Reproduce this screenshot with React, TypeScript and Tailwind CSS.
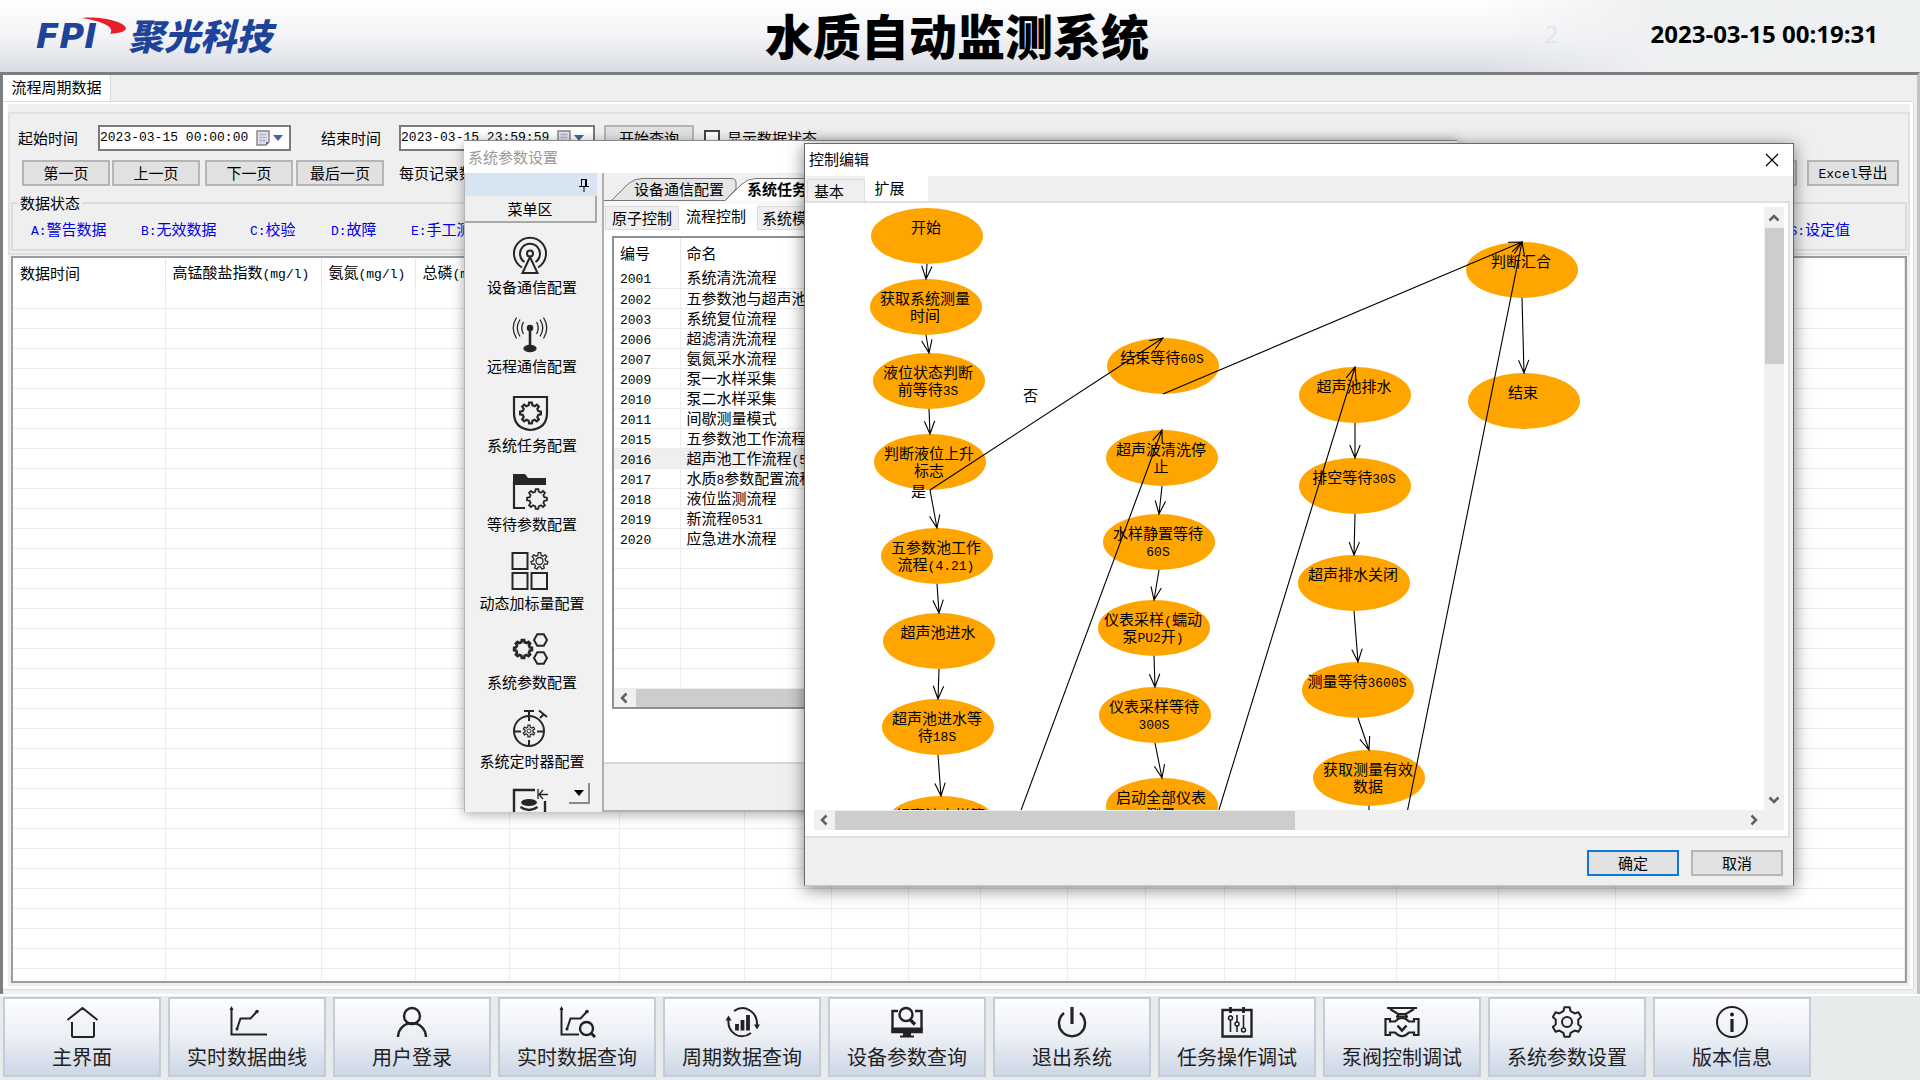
import React from "react";

const FONT = "font-['Noto_Sans_CJK_SC',sans-serif]";

/* Text with half-width characters set in a narrower monospace face. */
function Mixed({ text }: { text: string }) {
  return (
    <>
      {text.split(/([\x20-\x7e]+)/).map((part, i) =>
        i % 2 === 1 ? (
          <span key={i} className="font-['Liberation_Mono',monospace] text-[13px]">
            {part}
          </span>
        ) : (
          part
        ),
      )}
    </>
  );
}

function gear(cx: number, cy: number, inner: number, outer: number, teeth: number) {
  const pts: string[] = [];
  const step = (Math.PI * 2) / teeth;
  for (let i = 0; i < teeth; i++) {
    const a = i * step - Math.PI / 2;
    const spots: [number, number][] = [
      [inner, -0.3],
      [outer, -0.17],
      [outer, 0.17],
      [inner, 0.3],
    ];
    for (const [r, f] of spots) {
      pts.push(`${(cx + r * Math.cos(a + f * step)).toFixed(2)} ${(cy + r * Math.sin(a + f * step)).toFixed(2)}`);
    }
  }
  return `M${pts.join("L")}Z`;
}

function hexagon(cx: number, cy: number, r: number) {
  const pts = [0, 1, 2, 3, 4, 5].map((i) => {
    const a = (i * Math.PI) / 3;
    return `${(cx + r * Math.cos(a)).toFixed(2)} ${(cy + r * Math.sin(a)).toFixed(2)}`;
  });
  return `M${pts.join("L")}Z`;
}

/* ---------- header ---------- */

function Header() {
  return (
    <header className="relative flex h-[72px] shrink-0 items-center justify-between bg-gradient-to-b from-white via-[#f3f4f6] to-[#d9dce4] pb-1 pl-9 pr-[42px]">
      <div className="absolute inset-y-0 right-0 w-[440px] bg-gradient-to-r from-transparent to-[#eef0f2] to-40%" />
      <div className="relative flex flex-1 items-center text-[#20439a]">
        <svg width="92" height="40" viewBox="0 0 92 40" aria-label="FPI">
          <text x="0" y="34" fontFamily="DejaVu Sans" fontWeight="700" fontStyle="italic" fontSize="34" fill="#20439a">
            FPI
          </text>
          <path d="M46 4C66 2 88 8 90 14C90 18 82 19 74 20C79 14 70 8 46 4Z" fill="#e5202b" />
        </svg>
        <span className="text-[36px] font-black italic leading-10">聚光科技</span>
      </div>
      <h1 className="relative text-[48px] font-black leading-[60px] text-black">水质自动监测系统</h1>
      <div className="relative flex flex-1 items-center justify-end font-['Open_Sans',sans-serif] text-2xl font-bold text-black">
        <span className="mr-[92px] font-normal text-[#e3e6ea]">2</span>
        <time>2023-03-15 00:19:31</time>
      </div>
    </header>
  );
}

/* ---------- query page ---------- */

const BTN = "flex items-center justify-center border-2 border-[#b5b5b5] bg-[#e1e1e1] leading-5 text-black";

function DateField({ id, value, width }: { id: string; value: string; width: string }) {
  return (
    <div className={`flex h-[26px] items-center border-2 border-[#7a7a7a] bg-white ${width}`}>
      <input
        id={id}
        defaultValue={value}
        className="w-[152px] min-w-0 bg-transparent font-['Liberation_Mono',monospace] text-[13px] leading-5 outline-none"
      />
      <button type="button" aria-label="选择日期" className="ml-1 flex items-center gap-[3px]">
        <svg width="14" height="16" viewBox="0 0 14 16">
          <path d="M1 1h12v11l-3 3H1z" fill="#dfe3ec" stroke="#8b8286" strokeWidth="1.4" />
          <path d="M3 4.500h8M3 7.500h8M3 10.500h8M5 3v10M8 3v10" stroke="#b3bccd" strokeWidth="1" />
          <path d="M13 12l-3 3v-3z" fill="#6c6266" />
        </svg>
        <svg width="10" height="6" viewBox="0 0 10 6">
          <path d="M0 0h10L5 6z" fill="#44659c" />
        </svg>
      </button>
    </div>
  );
}

const COLS = [
  "w-[152px]", "w-[156px]", "w-[94px]", "w-[94px]", "w-[110px]", "w-[125px]", "w-[87px]", "w-[77px]", "w-[72px]",
  "w-[87px]", "w-[78px]", "w-[79px]", "w-[71px]", "w-[101px]", "w-[102px]", "w-[117px]", "",
];
const HEADS = ["数据时间", "高锰酸盐指数(mg/l)", "氨氮(mg/l)", "总磷(mg/l)"];
const PAGERS: [string, string][] = [
  ["第一页", "mr-[2px]"],
  ["上一页", "mr-[5px]"],
  ["下一页", "mr-[3px]"],
  ["最后一页", "mr-[15px]"],
];
const STATES: [string, string][] = [
  ["A:警告数据", "w-[110px]"],
  ["B:无效数据", "w-[109px]"],
  ["C:校验", "w-[81px]"],
  ["D:故障", "w-[80px]"],
  ["E:手工测试", "w-[110px]"],
];

function QueryPage() {
  return (
    <main className="flex min-h-0 flex-1 flex-col border-[3px] border-b-0 border-[#7c7e82] border-r-[#c4c4c4] bg-[#efefef] text-[15px]">
      <div role="tablist" className="flex h-[26px] shrink-0 items-stretch">
        <button type="button" role="tab" aria-selected className="w-[108px] border-r border-[#d9d9d9] bg-white pb-[2px] leading-5">
          流程周期数据
        </button>
      </div>
      <div className="mb-1 mr-[3px] flex min-h-0 flex-1 flex-col border border-l-0 border-[#dcdcdc] bg-white px-[3px] pb-[3px] pl-[5px] pt-[2px]">
        <div className="flex min-h-0 flex-1 flex-col bg-[#efefef] pt-2">
          <div className="shrink-0 border-2 border-[#e0e0e0] pb-[2px] pt-[11px]">
            <div className="flex h-[26px] items-center pl-2">
              <label htmlFor="from" className="mr-5">起始时间</label>
              <DateField id="from" value="2023-03-15 00:00:00" width="w-[193px]" />
              <label htmlFor="to" className="ml-[30px] mr-[18px]">结束时间</label>
              <DateField id="to" value="2023-03-15 23:59:59" width="w-[196px]" />
              <button type="button" className={`${BTN} ml-[9px] mr-[10px] h-[26px] w-[90px]`}>开始查询</button>
              <input id="show" type="checkbox" className="mr-[7px] size-4 appearance-none border-2 border-[#444] bg-white" />
              <label htmlFor="show">显示数据状态</label>
            </div>
            <div className="mt-[9px] flex h-[26px] items-center pl-3 pr-[9px]">
              {PAGERS.map(([t, gap]) => (
                <button key={t} type="button" className={`${BTN} h-[26px] w-[88px] ${gap}`}>{t}</button>
              ))}
              <span>每页记录数</span>
              <button type="button" className={`${BTN} ml-auto mr-[10px] h-[26px] w-[92px]`}>查询</button>
              <button type="button" className={`${BTN} h-[26px] w-[92px]`}>
                <span><Mixed text="Excel导出" /></span>
              </button>
            </div>
            <fieldset className="mx-px mt-[9px] border-2 border-[#dcdcdc]">
              <legend className="ml-[5px] px-[2px] leading-4">数据状态</legend>
              <div className="flex h-[38px] items-center pl-[18px] pr-[55px] text-[#0000e6]">
                {STATES.map(([t, w]) => (
                  <span key={t} className={`${w} whitespace-nowrap leading-5`}><Mixed text={t} /></span>
                ))}
                <span className="ml-auto leading-5"><Mixed text="S:设定值" /></span>
              </div>
            </fieldset>
          </div>
          <div className="mx-[3px] mb-[3px] mt-px min-h-0 flex-1 overflow-hidden border-2 border-[#9a9ca0] bg-white">
            <table className="w-full table-fixed border-collapse">
              <colgroup>
                {COLS.map((w, i) => <col key={i} className={w} />)}
              </colgroup>
              <thead>
                <tr className="h-[30px]">
                  {COLS.map((_, i) => (
                    <th
                      key={i}
                      scope="col"
                      className="overflow-hidden whitespace-nowrap border-r border-[#e6e6e6] p-0 pl-[7px] text-left font-normal leading-5"
                    >
                      {HEADS[i] ? <Mixed text={HEADS[i]} /> : null}
                    </th>
                  ))}
                </tr>
              </thead>
              <tbody>
                {Array.from({ length: 34 }, (_, r) => (
                  <tr key={r} className="h-5">
                    {COLS.map((_, i) => <td key={i} className="border-b border-r border-[#ececec] p-0" />)}
                  </tr>
                ))}
                <tr className="h-5">
                  {COLS.map((_, i) => <td key={i} className="border-r border-[#ececec] p-0" />)}
                </tr>
              </tbody>
            </table>
          </div>
        </div>
      </div>
    </main>
  );
}

/* ---------- settings window ---------- */

const MENU: { label: string; icon: React.ReactNode }[] = [
  {
    label: "设备通信配置",
    icon: (
      <g fill="none" stroke="#262626" strokeWidth="2">
        <path d="M12 33.500A16 16 0 1 1 28 33.500" />
        <path d="M14.500 28A10 10 0 1 1 25.500 28" />
        <circle cx="20" cy="19.500" r="3" />
        <path d="M20 23L12.500 39H27.500Z" />
      </g>
    ),
  },
  {
    label: "远程通信配置",
    icon: (
      <g fill="none" stroke="#262626" strokeWidth="1.3">
        <path d="M13.500 9Q10 15 13.500 21M10 6.500Q4.500 15 10 23.500M6.500 4.500Q0 15 6.500 25.500" />
        <path d="M26.500 9Q30 15 26.500 21M30 6.500Q35.500 15 30 23.500M33.500 4.500Q40 15 33.500 25.500" />
        <circle cx="20" cy="15" r="2.600" fill="#262626" />
        <path d="M20 15V35" strokeWidth="2.600" />
        <ellipse cx="20" cy="35.500" rx="6" ry="3" fill="#262626" />
      </g>
    ),
  },
  {
    label: "系统任务配置",
    icon: (
      <g fill="none" stroke="#262626" strokeWidth="2.200">
        <path d="M4 5H37V21C37 31 31 37 20.500 38C10 37 4 31 4 21Z" />
        <path d={gear(20.5, 21, 8, 10.5, 8)} strokeWidth="2.200" />
      </g>
    ),
  },
  {
    label: "等待参数配置",
    icon: (
      <g fill="none" stroke="#262626" strokeWidth="2.200">
        <path d="M3 3H15L18 7H36V14H3Z" fill="#262626" stroke="none" />
        <path d="M4 10V37H15" />
        <path d={gear(27, 28, 7.5, 10, 8)} strokeWidth="1.800" />
      </g>
    ),
  },
  {
    label: "动态加标量配置",
    icon: (
      <g fill="none" stroke="#262626" strokeWidth="2">
        <path d="M2.500 3H17.500V19H2.500ZM2.500 23H17.500V39H2.500ZM21.500 23H37V39H21.500Z" />
        <path d={gear(29.5, 11, 6, 8.5, 7)} strokeWidth="1.300" />
        <circle cx="29.500" cy="11" r="3.500" strokeWidth="1.300" />
      </g>
    ),
  },
  {
    label: "系统参数配置",
    icon: (
      <g fill="none" stroke="#262626" strokeWidth="2">
        <path d={gear(13, 20, 7, 9, 8)} strokeWidth="2.600" />
        <path d={hexagon(30.5, 11, 6.5)} />
        <path d={hexagon(30.5, 29, 6.5)} />
      </g>
    ),
  },
  {
    label: "系统定时器配置",
    icon: (
      <g fill="none" stroke="#262626" strokeWidth="2">
        <circle cx="19" cy="23" r="15" />
        <path d="M14 3H24M19 3V13M30 10L34 6M29 2.500L37 9M19 32V38M4 23.500H11M27 23.500H34" />
        <path d={gear(19, 23, 4, 6, 6)} strokeWidth="1.200" />
        <circle cx="19" cy="23" r="2" strokeWidth="1" />
      </g>
    ),
  },
  {
    label: "数据导出配置",
    icon: (
      <g fill="none" stroke="#262626" strokeWidth="2.400">
        <path d="M25 3H4V39M35 14V39" />
        <ellipse cx="19" cy="15.500" rx="8" ry="3.500" fill="#262626" stroke="none" />
        <path d="M10.500 20Q19 26 27.500 20" />
        <path d="M28 2V12M38 7.500H29M33 3L29 7.500L33 12" strokeWidth="1.300" />
      </g>
    ),
  },
];

const FLOWS: [string, string][] = [
  ["2001", "系统清洗流程"],
  ["2002", "五参数池与超声池流程"],
  ["2003", "系统复位流程"],
  ["2006", "超滤清洗流程"],
  ["2007", "氨氮采水流程"],
  ["2009", "泵一水样采集"],
  ["2010", "泵二水样采集"],
  ["2011", "间歇测量模式"],
  ["2015", "五参数池工作流程"],
  ["2016", "超声池工作流程(5)"],
  ["2017", "水质8参数配置流程"],
  ["2018", "液位监测流程"],
  ["2019", "新流程0531"],
  ["2020", "应急进水流程"],
  ["", ""], ["", ""], ["", ""], ["", ""], ["", ""], ["", ""], ["", ""],
];

function SettingsWindow() {
  return (
    <section
      aria-label="系统参数设置"
      className="absolute left-[464px] top-[140px] flex h-[672px] w-[993px] flex-col border-t border-[#8a8a8a] bg-[#efefef] text-[15px] shadow-[0_2px_12px_rgba(0,0,0,0.35)]"
    >
      <div className="flex h-8 shrink-0 items-center bg-white pl-1 text-[#999]">系统参数设置</div>
      <div className="flex min-h-0 flex-1">
        <nav className="relative w-[138px] overflow-hidden border-l border-[#b5b5b5] bg-[#f1f1f1]">
          <div className="flex h-[23px] w-[132px] items-center justify-end bg-[#d7e4f2] pr-2">
            <svg width="10" height="14" viewBox="0 0 10 14" fill="none" stroke="#000">
              <path d="M2.500 1V8M2 1.500H8M0 8.500H10M5 9V14" />
              <path d="M7 1V8" strokeWidth="2" />
            </svg>
          </div>
          <button type="button" className="mb-px h-[27px] w-[132px] border-b-2 border-r-2 border-[#a8a8a8] bg-[#efefef] leading-5">
            菜单区
          </button>
          <ul className="w-[130px]">
            {MENU.map(({ label, icon }) => (
              <li key={label} className="h-[79px] pt-[10px]">
                <button type="button" className="flex w-full flex-col items-center whitespace-nowrap">
                  <svg width="40" height="40" viewBox="0 0 40 40">{icon}</svg>
                  <span className="ml-1 mt-[3px] leading-5">{label}</span>
                </button>
              </li>
            ))}
          </ul>
          <button
            type="button"
            aria-label="向下滚动"
            className="absolute bottom-2 left-[104px] flex size-[21px] items-center justify-center border-b-2 border-r-2 border-[#8a8a8a] bg-[#f1f1f1]"
          >
            <svg width="10" height="6" viewBox="0 0 10 6"><path d="M0 0h10L5 6z" /></svg>
          </button>
        </nav>
        <div className="flex min-w-0 flex-1 flex-col border-b-2 border-l-2 border-[#b0b0b0]">
          <div role="tablist" className="relative flex h-7 shrink-0 items-end">
            <svg className="absolute inset-0" width="500" height="28" viewBox="0 0 500 28" fill="none" stroke="#777">
              <path d="M0 27.500H121L138 11Q144 5.500 152 5.500H260V28" fill="#fff" stroke="none" />
              <path d="M0 0H152Q144 5.500 138 11L121 27.500H0Z" fill="#efefef" stroke="none" />
              <path d="M0 27.500H121L138 11Q144 5.500 152 5.500H260V28" />
              <path d="M7.500 27.500L24 11Q30 5.500 38 5.500H128Q132 5.500 132 10V16L121 27.500Z" fill="#e6e6e6" />
            </svg>
            <button type="button" role="tab" className="relative ml-[30px] mr-[23px] pb-[2px] leading-5">设备通信配置</button>
            <button type="button" role="tab" aria-selected className="relative pb-[2px] font-bold leading-5">系统任务配置</button>
          </div>
          <div className="flex min-h-0 flex-1 flex-col bg-white">
            <div role="tablist" className="flex h-[29px] shrink-0 items-end bg-[#f7f7f7] pl-px">
              <button type="button" role="tab" className="h-6 w-[74px] border border-[#dcdcdc] bg-[#efefef] leading-5">原子控制</button>
              <button type="button" role="tab" aria-selected className="h-[26px] w-[78px] bg-white pb-[2px] pr-1 leading-5">流程控制</button>
              <button type="button" role="tab" className="h-6 w-[70px] border border-[#dcdcdc] bg-[#efefef] leading-5">系统模式</button>
            </div>
            <div className="ml-2 mr-2 mt-[6px] h-[473px] shrink-0 overflow-hidden border-2 border-[#8e9096] bg-white">
              <table className="w-full table-fixed border-collapse">
                <colgroup>
                  <col className="w-[66px]" />
                  <col />
                </colgroup>
                <thead>
                  <tr className="h-[30px]">
                    <th scope="col" className="border-r border-[#e6e6e6] p-0 pl-[6px] text-left font-normal leading-5">编号</th>
                    <th scope="col" className="p-0 pl-[6px] text-left font-normal leading-5">命名</th>
                  </tr>
                </thead>
                <tbody>
                  {FLOWS.map(([id, name], i) => (
                    <tr key={i} className={id === "2016" ? "h-5 bg-[#efefef]" : "h-5"}>
                      <td className="border-b border-r border-[#ececec] p-0 pl-[6px]">
                        <div className="h-[19px] leading-[18px]"><Mixed text={id} /></div>
                      </td>
                      <td className="border-b border-[#ececec] p-0 pl-[6px]">
                        <div className="h-[19px] leading-[18px]"><Mixed text={name} /></div>
                      </td>
                    </tr>
                  ))}
                </tbody>
              </table>
              <div className="flex h-[19px] items-center bg-[#f0f0f0]">
                <span className="flex w-[22px] justify-center"><Chevron dir="left" /></span>
                <span className="h-full w-[600px] bg-[#cdcdcd]" />
              </div>
            </div>
            <div className="mt-auto h-12 border-t-2 border-[#d8d8d8] bg-[#efefef]" />
          </div>
        </div>
      </div>
    </section>
  );
}

const CHEVRONS = {
  left: "M7.500 1.500L3 6L7.500 10.500",
  right: "M4.500 1.500L9 6L4.500 10.500",
  up: "M1.500 8.500L6 4L10.500 8.500",
  down: "M1.500 3.500L6 8L10.500 3.500",
};

function Chevron({ dir }: { dir: keyof typeof CHEVRONS }) {
  return (
    <svg width="12" height="12" viewBox="0 0 12 12" fill="none" stroke="#606060" strokeWidth="2.500">
      <path d={CHEVRONS[dir]} />
    </svg>
  );
}

/* ---------- flow editor window ---------- */

type FlowNode = { x: number; y: number; lines: string[] };

/* Centres on the canvas; every node is an ellipse of 112 by 56. */
const NODES: FlowNode[] = [
  { x: 113, y: 29, lines: ["开始"] },
  { x: 112, y: 100, lines: ["获取系统测量", "时间"] },
  { x: 115, y: 174, lines: ["液位状态判断", "前等待3S"] },
  { x: 116, y: 255, lines: ["判断液位上升", "标志"] },
  { x: 123, y: 349, lines: ["五参数池工作", "流程(4.21)"] },
  { x: 125, y: 434, lines: ["超声池进水"] },
  { x: 124, y: 520, lines: ["超声池进水等", "待18S"] },
  { x: 127, y: 617, lines: ["超声池水样等", "待"] },
  { x: 349, y: 159, lines: ["结束等待60S"] },
  { x: 348, y: 251, lines: ["超声波清洗停", "止"] },
  { x: 345, y: 335, lines: ["水样静置等待", "60S"] },
  { x: 340, y: 421, lines: ["仪表采样(蠕动", "泵PU2开)"] },
  { x: 341, y: 508, lines: ["仪表采样等待", "300S"] },
  { x: 348, y: 599, lines: ["启动全部仪表", "测量"] },
  { x: 541, y: 188, lines: ["超声池排水"] },
  { x: 541, y: 279, lines: ["排空等待30S"] },
  { x: 540, y: 376, lines: ["超声排水关闭"] },
  { x: 544, y: 483, lines: ["测量等待3600S"] },
  { x: 555, y: 571, lines: ["获取测量有效", "数据"] },
  { x: 708, y: 63, lines: ["判断汇合"] },
  { x: 710, y: 194, lines: ["结束"] },
];

const LINKS: [number, number][] = [
  [0, 1], [1, 2], [2, 3], [3, 4], [4, 5], [5, 6], [6, 7], [3, 8], [8, 19],
  [9, 10], [10, 11], [11, 12], [12, 13], [14, 15], [15, 16], [16, 17], [17, 18], [19, 20],
];

function arrow(x1: number, y1: number, x2: number, y2: number) {
  const a = Math.atan2(y2 - y1, x2 - x1);
  const barb = (d: number) => `${(x2 - 14 * Math.cos(a + d)).toFixed(1)} ${(y2 - 14 * Math.sin(a + d)).toFixed(1)}`;
  return `M${x1} ${y1}L${x2} ${y2}M${barb(0.38)}L${x2} ${y2}L${barb(-0.38)}`;
}

const EDGES: string[] = [
  ...LINKS.map(([a, b]) => arrow(NODES[a].x, NODES[a].y + 28, NODES[b].x, NODES[b].y - 28)),
  arrow(206, 606, 348, 223),
  arrow(404, 606, 541, 160),
  arrow(593, 606, 708, 35),
  "M555 599V610",
];

function FlowCanvas() {
  return (
    <div className="relative h-full min-w-0 flex-1 overflow-hidden bg-white">
      {NODES.map((n, i) => (
        <div
          key={i}
          className="absolute h-14 w-28 -translate-x-1/2 -translate-y-1/2 whitespace-nowrap rounded-[50%] bg-[#ffa500] pr-[2px] pt-[10px] text-center leading-[17px]"
          style={{ left: n.x, top: n.y }}
        >
          {n.lines.map((l) => (
            <div key={l} className="-mx-4 h-[17px]"><Mixed text={l} /></div>
          ))}
        </div>
      ))}
      <span className="absolute left-[209px] top-[178px] leading-5">否</span>
      <span className="absolute left-[97px] top-[274px] leading-5">是</span>
      <svg className="absolute inset-0" width="951" height="604" viewBox="0 0 951 604" fill="none" stroke="#000" strokeWidth="1.100">
        {EDGES.map((d) => <path key={d} d={d} />)}
      </svg>
    </div>
  );
}

function EditorWindow() {
  return (
    <section
      aria-label="控制编辑"
      className="absolute left-[804px] top-[143px] flex w-[990px] flex-col border border-[#6a6a6a] border-b-[#c8c8c8] bg-[#efefef] text-[15px] shadow-[0_3px_16px_rgba(0,0,0,0.5)]"
    >
      <div className="flex h-8 items-center justify-between bg-white pl-1 pr-[14px]">
        <span className="pb-px">控制编辑</span>
        <button type="button" aria-label="关闭">
          <svg width="14" height="14" viewBox="0 0 14 14" stroke="#000" strokeWidth="1.200"><path d="M1 1L13 13M13 1L1 13" /></svg>
        </button>
      </div>
      <div role="tablist" className="flex h-[25px] items-end pl-[2px]">
        <button type="button" role="tab" className="h-[22px] w-[58px] border border-b-0 border-[#dedede] pr-[14px] leading-5">基本</button>
        <button type="button" role="tab" aria-selected className="h-[25px] w-[63px] bg-white pb-[2px] pr-[14px] leading-5">扩展</button>
      </div>
      <div className="mr-[3px] border-2 border-l-0 border-[#dfdfdf] bg-white pb-[6px] pl-[9px] pr-1 pt-1">
        <div className="flex h-[603px]">
          <FlowCanvas />
          <div className="flex w-5 flex-col items-center bg-[#f0f0f0]">
            <span className="flex h-[21px] items-center"><Chevron dir="up" /></span>
            <span className="h-[136px] w-[19px] bg-[#cdcdcd]" />
            <span className="mt-auto flex h-[21px] items-center"><Chevron dir="down" /></span>
          </div>
        </div>
        <div className="flex h-5 items-center bg-[#f0f0f0]">
          <span className="flex w-[21px] justify-center"><Chevron dir="left" /></span>
          <span className="h-[19px] w-[460px] bg-[#cdcdcd]" />
          <span className="ml-auto mr-[25px]"><Chevron dir="right" /></span>
        </div>
      </div>
      <div className="flex justify-end gap-3 pb-[9px] pr-[10px] pt-3">
        <button type="button" className="h-[26px] w-[92px] border-2 border-[#0f78d4] bg-[#e1e1e1] leading-5">确定</button>
        <button type="button" className={`${BTN} h-[26px] w-[92px]`}>取消</button>
      </div>
    </section>
  );
}

/* ---------- bottom bar ---------- */

const TOOLS: { label: string; icon: React.ReactNode }[] = [
  { label: "主界面", icon: <path d="M7.500 14L22.500 2L37.500 14M12 16V29.500Q12 31 13.500 31H32.500Q34 31 34 29.500V16" /> },
  {
    label: "实时数据曲线",
    icon: (
      <>
        <path d="M6.500 2V28.500H42M12 23L15.500 12.500H25.500L32 5.500" />
        <path d="M4.500 4L6.500 0L8.500 4Z" fill="#222" stroke="none" />
        <circle cx="12" cy="23" r="1.500" fill="#222" stroke="none" />
        <circle cx="32" cy="5.500" r="1.800" fill="#222" stroke="none" />
      </>
    ),
  },
  {
    label: "用户登录",
    icon: <g strokeWidth="2.400"><circle cx="22" cy="10" r="8" /><path d="M8 31C9 12.500 35 12.500 36 31" /></g>,
  },
  {
    label: "实时数据查询",
    icon: (
      <>
        <path d="M6.500 2V28.500H24M12 23L15.500 12.500H25.500L32 5.500" />
        <path d="M4.500 4L6.500 0L8.500 4Z" fill="#222" stroke="none" />
        <circle cx="12" cy="23" r="1.500" fill="#222" stroke="none" />
        <circle cx="32" cy="5.500" r="1.800" fill="#222" stroke="none" />
        <circle cx="31.500" cy="22.500" r="6.500" strokeWidth="2.400" />
        <path d="M36 27L40 31" strokeWidth="3" />
      </>
    ),
  },
  {
    label: "周期数据查询",
    icon: (
      <>
        <path d="M14 5C24 -2 38 5 37 20M31 27C20 35 7 27 8.500 13" />
        <path d="M34 18.500H40L37 23.500ZM5.500 14.500H11.500L8.500 9.500Z" fill="#222" stroke="none" />
        <path d="M17 18V24.500M22.500 14V24.500M28 9V24.500" strokeWidth="3.800" />
      </>
    ),
  },
  {
    label: "设备参数查询",
    icon: (
      <>
        <path d="M13 5H7.500V26H36.500V5H30" strokeWidth="2.400" />
        <path d="M6.500 21.500H37.500V27H26V29.500H29V31.500H15V29.500H18V27H6.500Z" fill="#222" stroke="none" />
        <circle cx="21" cy="8.500" r="6.500" strokeWidth="2.400" />
        <path d="M25 13.500L30 18.500" strokeWidth="3.200" />
      </>
    ),
  },
  { label: "退出系统", icon: <g strokeWidth="2.400"><path d="M22 1V18" strokeWidth="3.200" /><path d="M14 7A13 13 0 1 0 30 7" /></g> },
  {
    label: "任务操作调试",
    icon: (
      <>
        <path d="M7.500 4H36.500V30.500H7.500Z" strokeWidth="2.400" />
        <path d="M15.500 1V7M28.500 1V7" strokeWidth="2.800" />
        <path d="M15.500 9V26M22 9V26M28.500 9V26" strokeWidth="1.600" />
        <g fill="#f4f5f9" strokeWidth="1.500"><circle cx="15.500" cy="12" r="2" /><circle cx="22" cy="18" r="2" /><circle cx="28.500" cy="24" r="2" /></g>
      </>
    ),
  },
  {
    label: "泵阀控制调试",
    icon: (
      <g strokeWidth="2.200">
        <path d="M7 2H37M10 3L18 8H26L34 3M18 8V13M26 8V13M16 10.500H28" />
        <path d="M5.500 13H10V15.500H15Q22 8.500 29 15.500H34V13H38.500V29H34V26.500H29Q22 34 15 26.500H10V29H5.500Z" />
        <path d="M17.500 19.500L22 24.500L26.500 19.500" strokeWidth="2.600" />
      </g>
    ),
  },
  {
    label: "系统参数设置",
    icon: <><path d={gear(22, 16, 11.5, 15, 6)} strokeLinejoin="round" /><circle cx="22" cy="16" r="5" /></>,
  },
  {
    label: "版本信息",
    icon: (
      <>
        <circle cx="22" cy="16" r="15" />
        <path d="M22 13V26" strokeWidth="3.200" />
        <circle cx="22" cy="8.500" r="2" fill="#222" stroke="none" />
      </>
    ),
  },
];

function Toolbar() {
  return (
    <footer className="flex h-[86px] shrink-0 gap-[7px] overflow-hidden border-t-2 border-white bg-[#e7ebec] px-[3px] pb-1 pt-px">
      {TOOLS.map(({ label, icon }) => (
        <button
          key={label}
          type="button"
          className="flex h-20 w-[158px] shrink-0 flex-col items-center border-2 border-[#c3ccd8] bg-gradient-to-b from-[#fdfdfe] via-[#eceff5] to-[#cdd7e6] pt-[7px]"
        >
          <svg width="44" height="32" viewBox="0 0 44 32" fill="none" stroke="#222" strokeWidth="2">{icon}</svg>
          <span className="mt-[7px] whitespace-nowrap text-xl leading-6 text-[#222]">{label}</span>
        </button>
      ))}
    </footer>
  );
}

export default function App() {
  return (
    <div className={`relative flex h-screen flex-col overflow-hidden bg-[#efefef] text-black ${FONT}`}>
      <Header />
      <QueryPage />
      <Toolbar />
      <SettingsWindow />
      <EditorWindow />
    </div>
  );
}
